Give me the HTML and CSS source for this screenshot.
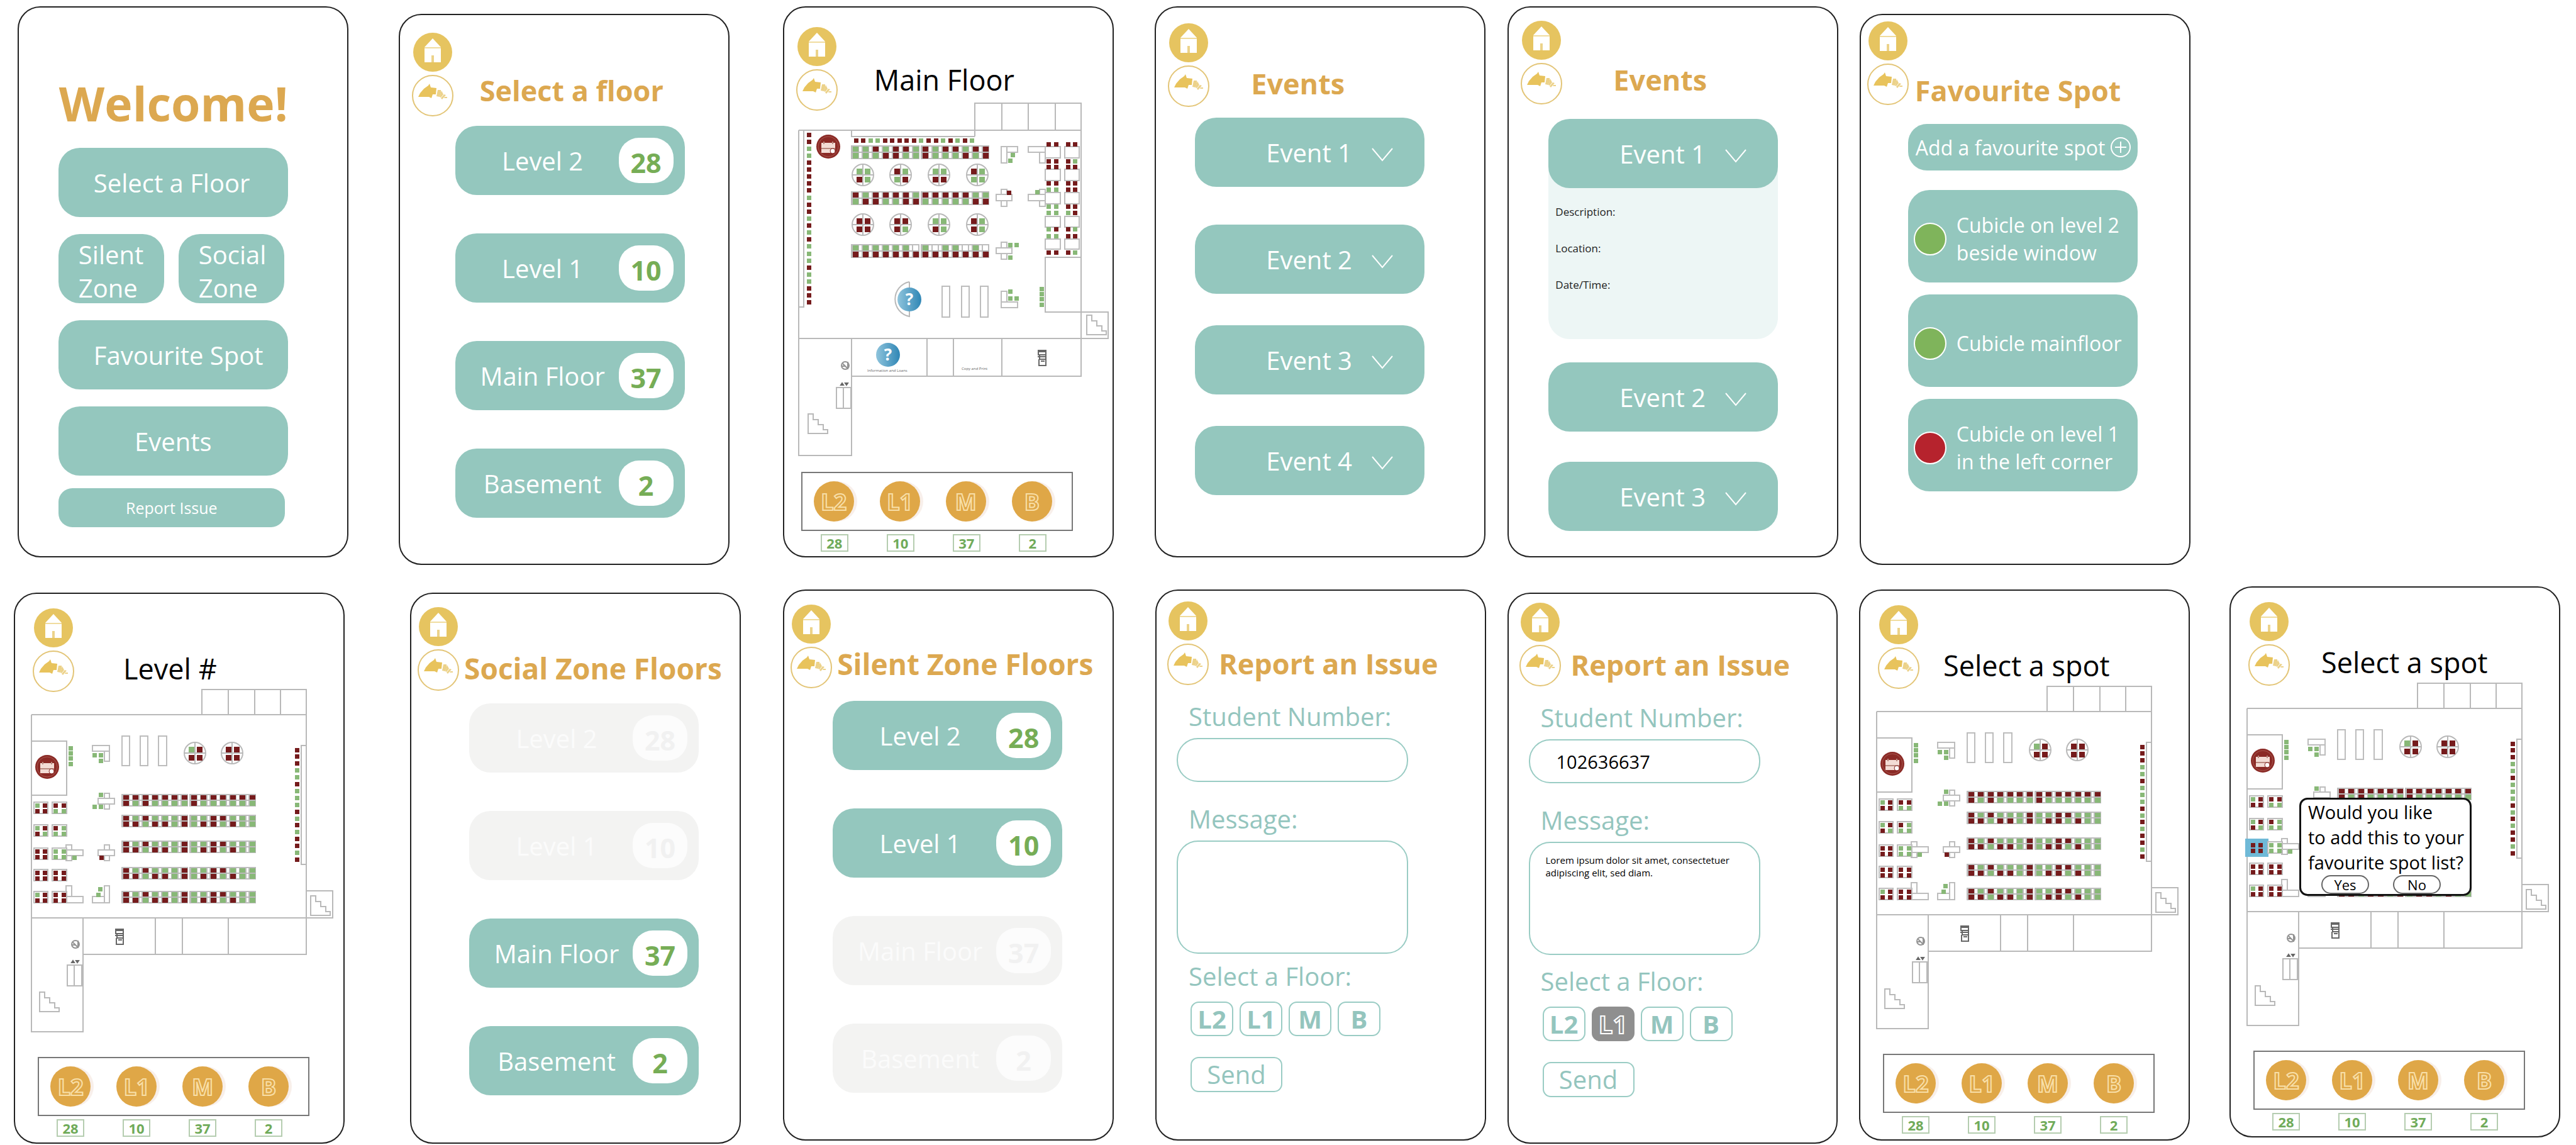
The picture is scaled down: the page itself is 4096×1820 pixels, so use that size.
FILE: index.html
```html
<!DOCTYPE html>
<html lang="en">
<head>
<meta charset="utf-8">
<title>Library seat finder screens</title>
<link rel="stylesheet" href="styles.css">
</head>
<body>
<svg class="sprite" aria-hidden="true">
  <symbol id="i-home" viewBox="0 0 62 62">
    <circle cx="31" cy="31" r="31" fill="#e6c460"/>
    <path d="M31 9L44 23V47H18V23Z" fill="#fff"/>
    <path d="M18 24H44" stroke="#f0dc9e" stroke-width="2"/>
    <path d="M29 36H33V47H29Z" fill="#ecd38a"/>
  </symbol>
  <symbol id="i-back" viewBox="0 0 66 66">
    <circle cx="33" cy="33" r="32" fill="#fff" stroke="#e3c577" stroke-width="2"/>
    <path d="M10 35L13 29L19 22L26 17L28 14L30 20L39 21L38 31H33L31 37L27 35Z" fill="#e8c35c"/>
    <path d="M41 24H46V29L44 35L39 34Z" fill="#ecd28a"/>
    <path d="M47 25L50 31L46 36L44 35ZM51 31L54 32L48 39L46 37ZM52 35H56V37H51Z" fill="#ecd28a"/>
  </symbol>
  <symbol id="i-chevron" viewBox="0 0 34 22">
    <path d="M1 1L17 20L33 1" fill="none" stroke="#fff" stroke-width="2"/>
  </symbol>
  <symbol id="i-plus" viewBox="0 0 34 34">
    <circle cx="17" cy="17" r="15" fill="none" stroke="#fff" stroke-width="2"/>
    <path d="M17 8V26M8 17H26" stroke="#fff" stroke-width="2"/>
  </symbol>
</svg>

<main class="board">
  <div class="row">
    <section class="phone welcome">
      <h1 class="hero">Welcome!</h1>
      <div class="menu">
        <button class="pill pill--start">Select a Floor</button>
        <div class="zones">
          <button class="pill pill--zone">Silent<br>Zone</button>
          <button class="pill pill--zone">Social<br>Zone</button>
        </div>
        <button class="pill pill--start">Favourite Spot</button>
        <button class="pill">Events</button>
        <button class="pill pill--small">Report Issue</button>
      </div>
    </section>

    <section class="phone floors low">
      <header class="head">
        <nav class="nav"><a href="#home" aria-label="Home"><svg class="home"><use href="#i-home"/></svg></a><a href="#back" aria-label="Back"><svg class="back"><use href="#i-back"/></svg></a></nav>
        <h2 class="title">Select a floor</h2>
      </header>
      <div class="stack stack--floors">
        <button class="pill pill--floor"><span class="name">Level 2</span><span class="badge">28</span></button>
        <button class="pill pill--floor"><span class="name">Level 1</span><span class="badge">10</span></button>
        <button class="pill pill--floor"><span class="name">Main Floor</span><span class="badge">37</span></button>
        <button class="pill pill--floor"><span class="name">Basement</span><span class="badge">2</span></button>
      </div>
    </section>

    <section class="phone map map--main">
      <header class="head">
        <nav class="nav"><a href="#home" aria-label="Home"><svg class="home"><use href="#i-home"/></svg></a><a href="#back" aria-label="Back"><svg class="back"><use href="#i-back"/></svg></a></nav>
        <h2 class="title title--plain">Main Floor</h2>
      </header>
      <svg class="plan" data-plan="main" viewBox="0 0 496 566" role="img" aria-label="Main floor seats"></svg>
      <div class="switch"><button class="disc">L2</button><button class="disc">L1</button><button class="disc">M</button><button class="disc">B</button></div>
      <div class="counts"><span>28</span><span>10</span><span>37</span><span>2</span></div>
    </section>

    <section class="phone events">
      <header class="head">
        <nav class="nav"><a href="#home" aria-label="Home"><svg class="home"><use href="#i-home"/></svg></a><a href="#back" aria-label="Back"><svg class="back"><use href="#i-back"/></svg></a></nav>
        <h2 class="title">Events</h2>
      </header>
      <div class="stack stack--events">
        <button class="pill pill--event">Event 1<svg class="chevron"><use href="#i-chevron"/></svg></button>
        <button class="pill pill--event">Event 2<svg class="chevron"><use href="#i-chevron"/></svg></button>
        <button class="pill pill--event">Event 3<svg class="chevron"><use href="#i-chevron"/></svg></button>
        <button class="pill pill--event">Event 4<svg class="chevron"><use href="#i-chevron"/></svg></button>
      </div>
    </section>

    <section class="phone events events--open">
      <header class="head">
        <nav class="nav"><a href="#home" aria-label="Home"><svg class="home"><use href="#i-home"/></svg></a><a href="#back" aria-label="Back"><svg class="back"><use href="#i-back"/></svg></a></nav>
        <h2 class="title">Events</h2>
      </header>
      <div class="stack stack--events">
        <div class="expanded">
          <button class="pill pill--event" aria-expanded="true">Event 1<svg class="chevron"><use href="#i-chevron"/></svg></button>
          <div class="details"><p>Description:</p><p>Location:</p><p>Date/Time:</p></div>
        </div>
        <button class="pill pill--event">Event 2<svg class="chevron"><use href="#i-chevron"/></svg></button>
        <button class="pill pill--event">Event 3<svg class="chevron"><use href="#i-chevron"/></svg></button>
      </div>
    </section>

    <section class="phone favourites low">
      <header class="head">
        <nav class="nav"><a href="#home" aria-label="Home"><svg class="home"><use href="#i-home"/></svg></a><a href="#back" aria-label="Back"><svg class="back"><use href="#i-back"/></svg></a></nav>
        <h2 class="title">Favourite Spot</h2>
      </header>
      <div class="stack stack--spots">
        <button class="pill pill--add">Add a favourite spot<svg class="plus"><use href="#i-plus"/></svg></button>
        <button class="pill pill--spot"><span class="dot"></span><span>Cubicle on level 2<br>beside window</span></button>
        <button class="pill pill--spot"><span class="dot"></span><span>Cubicle mainfloor</span></button>
        <button class="pill pill--spot"><span class="dot dot--taken"></span><span>Cubicle on level 1<br>in the left corner</span></button>
      </div>
    </section>
  </div>

  <div class="row row--second">
    <section class="phone map map--level low">
      <header class="head">
        <nav class="nav"><a href="#home" aria-label="Home"><svg class="home"><use href="#i-home"/></svg></a><a href="#back" aria-label="Back"><svg class="back"><use href="#i-back"/></svg></a></nav>
        <h2 class="title title--plain">Level #</h2>
      </header>
      <svg class="plan" data-plan="level" viewBox="0 0 496 566" role="img" aria-label="Level seats"></svg>
      <div class="switch"><button class="disc">L2</button><button class="disc">L1</button><button class="disc">M</button><button class="disc">B</button></div>
      <div class="counts"><span>28</span><span>10</span><span>37</span><span>2</span></div>
    </section>

    <section class="phone zone zone--social low">
      <header class="head">
        <nav class="nav"><a href="#home" aria-label="Home"><svg class="home"><use href="#i-home"/></svg></a><a href="#back" aria-label="Back"><svg class="back"><use href="#i-back"/></svg></a></nav>
        <h2 class="title">Social Zone Floors</h2>
      </header>
      <div class="stack stack--floors">
        <button class="pill pill--floor" disabled><span class="name">Level 2</span><span class="badge">28</span></button>
        <button class="pill pill--floor" disabled><span class="name">Level 1</span><span class="badge">10</span></button>
        <button class="pill pill--floor"><span class="name">Main Floor</span><span class="badge">37</span></button>
        <button class="pill pill--floor"><span class="name">Basement</span><span class="badge">2</span></button>
      </div>
    </section>

    <section class="phone zone zone--silent">
      <header class="head">
        <nav class="nav"><a href="#home" aria-label="Home"><svg class="home"><use href="#i-home"/></svg></a><a href="#back" aria-label="Back"><svg class="back"><use href="#i-back"/></svg></a></nav>
        <h2 class="title">Silent Zone Floors</h2>
      </header>
      <div class="stack stack--floors">
        <button class="pill pill--floor"><span class="name">Level 2</span><span class="badge">28</span></button>
        <button class="pill pill--floor"><span class="name">Level 1</span><span class="badge">10</span></button>
        <button class="pill pill--floor" disabled><span class="name">Main Floor</span><span class="badge">37</span></button>
        <button class="pill pill--floor" disabled><span class="name">Basement</span><span class="badge">2</span></button>
      </div>
    </section>

    <section class="phone report report--empty">
      <header class="head">
        <nav class="nav"><a href="#home" aria-label="Home"><svg class="home"><use href="#i-home"/></svg></a><a href="#back" aria-label="Back"><svg class="back"><use href="#i-back"/></svg></a></nav>
        <h2 class="title">Report an Issue</h2>
      </header>
      <form class="form">
        <label for="number-a">Student Number:</label>
        <input id="number-a" class="field" type="text">
        <label for="message-a">Message:</label>
        <textarea id="message-a" class="field field--message"></textarea>
        <p class="legend" id="floor-a">Select a Floor:</p>
        <div class="choices" role="group" aria-labelledby="floor-a">
          <button type="button">L2</button><button type="button">L1</button><button type="button">M</button><button type="button">B</button>
        </div>
        <button class="send" type="button">Send</button>
      </form>
    </section>

    <section class="phone report report--filled low">
      <header class="head">
        <nav class="nav"><a href="#home" aria-label="Home"><svg class="home"><use href="#i-home"/></svg></a><a href="#back" aria-label="Back"><svg class="back"><use href="#i-back"/></svg></a></nav>
        <h2 class="title">Report an Issue</h2>
      </header>
      <form class="form">
        <label for="number-b">Student Number:</label>
        <input id="number-b" class="field" type="text" value="102636637">
        <label for="message-b">Message:</label>
        <textarea id="message-b" class="field field--message">Lorem ipsum dolor sit amet, consectetuer adipiscing elit, sed diam.</textarea>
        <p class="legend" id="floor-b">Select a Floor:</p>
        <div class="choices" role="group" aria-labelledby="floor-b">
          <button type="button">L2</button><button type="button" aria-pressed="true">L1</button><button type="button">M</button><button type="button">B</button>
        </div>
        <button class="send" type="button">Send</button>
      </form>
    </section>

    <section class="phone map map--level map--spot">
      <header class="head">
        <nav class="nav"><a href="#home" aria-label="Home"><svg class="home"><use href="#i-home"/></svg></a><a href="#back" aria-label="Back"><svg class="back"><use href="#i-back"/></svg></a></nav>
        <h2 class="title title--plain">Select a spot</h2>
      </header>
      <svg class="plan" data-plan="level" viewBox="0 0 496 566" role="img" aria-label="Level seats"></svg>
      <div class="switch"><button class="disc">L2</button><button class="disc">L1</button><button class="disc">M</button><button class="disc">B</button></div>
      <div class="counts"><span>28</span><span>10</span><span>37</span><span>2</span></div>
    </section>

    <section class="phone map map--level map--confirm high">
      <header class="head">
        <nav class="nav"><a href="#home" aria-label="Home"><svg class="home"><use href="#i-home"/></svg></a><a href="#back" aria-label="Back"><svg class="back"><use href="#i-back"/></svg></a></nav>
        <h2 class="title title--plain">Select a spot</h2>
      </header>
      <svg class="plan" data-plan="level" data-picked viewBox="0 0 496 566" role="img" aria-label="Level seats"></svg>
      <div class="switch"><button class="disc">L2</button><button class="disc">L1</button><button class="disc">M</button><button class="disc">B</button></div>
      <div class="counts"><span>28</span><span>10</span><span>37</span><span>2</span></div>
      <div class="dialog" role="dialog" aria-labelledby="ask">
        <p id="ask">Would you like<br>to add this to your<br>favourite spot list?</p>
        <div class="answers"><button>Yes</button><button>No</button></div>
      </div>
    </section>
  </div>
</main>
<script src="plans.js"></script>
</body>
</html>
```

FILE: styles.css
```css
* { box-sizing: border-box; }

body {
  margin: 0;
  background: #fff;
  color: #000;
  font-family: "Open Sans", "Noto Sans", sans-serif;
}

h1, h2, p { margin: 0; }

button, input, textarea {
  margin: 0;
  padding: 0;
  border: 0;
  background: none;
  color: inherit;
  font: inherit;
}

svg { display: block; }
.sprite { position: absolute; width: 0; height: 0; }

/* Board */
.row { display: flex; align-items: flex-start; }
.row--second { margin-top: 34px; }

.phone {
  --gap: 1%;
  flex: 0 0 12.84%;
  min-height: 876px;
  margin-top: 10px;
  margin-left: var(--gap);
  border: 2px solid #222;
  border-radius: 36px;
  background: #fff;
}
.row .low { margin-top: 22px; }
.row--second .phone { margin-top: 5px; }
.row--second .low { margin-top: 10px; }
.row--second .high { margin-top: 0; }

.welcome { --gap: 0.68%; }
.floors { --gap: 1.95%; }
.map--main { --gap: 2.08%; }
.events { --gap: 1.6%; }
.events--open { --gap: 0.86%; }
.favourites { --gap: 0.82%; }
.map--level { --gap: 0.54%; }
.zone--social { --gap: 2.54%; }
.zone--silent { --gap: 1.64%; }
.report--empty { --gap: 1.61%; }
.report--filled { --gap: 0.82%; }
.map--spot { --gap: 0.82%; }
.map--confirm { --gap: 1.54%; position: relative; }

/* Screen header */
.head {
  display: flex;
  align-items: flex-start;
  padding: var(--nav-y) 0 0 var(--nav-x);
  white-space: nowrap;
}
.nav {
  display: flex;
  flex-direction: column;
  align-items: center;
  gap: 5px;
  width: 66px;
}
.home { width: 62px; height: 62px; }
.back { width: 66px; height: 66px; }
.title {
  margin: var(--title-y, 66px) 0 0 var(--title-x);
  color: #dca850;
  font-size: 45px;
  line-height: 60px;
  font-weight: 700;
}
.title--plain { color: #000; font-weight: 400; }

.floors { --nav-x: 19px; --nav-y: 28px; --title-x: 42px; --title-y: 62px; --body-x: 88px; --body-gap: 15px; }
.map--main { --nav-x: 19px; --nav-y: 31px; --title-x: 58px; --title-y: 54px; --body-gap: -14px; }
.events { --nav-x: 19px; --nav-y: 25px; --title-x: 66px; --body-x: 62px; --body-gap: 17px; }
.events--open { --nav-y: 21px; --title-x: 81px; --title-y: 64px; --body-x: 63px; --body-gap: 23px; }
.favourites { --nav-x: 10px; --nav-y: 10px; --title-x: 10px; --title-y: 80px; --body-x: 75px; --body-gap: 23px; }
.map--level { --nav-x: 28px; --nav-y: 23px; --title-x: 78px; --body-gap: -6px; }
.map--spot { --title-x: 38px; }
.map--confirm { --title-x: 50px; }
.zone { --nav-x: 10px; --nav-y: 21px; --title-x: 8px; --title-y: 67px; --body-x: 92px; --body-gap: 20px; }
.zone .title { font-size: 46px; }
.zone--silent { --body-x: 77px; --nav-y: 22px; --title-y: 64px; --body-gap: 20px; }
.report { --nav-x: 17px; --nav-y: 17px; --title-x: 16px; --title-y: 69px; --body-gap: 26px; }
.report--filled { --nav-x: 17px; --nav-y: 14px; }

/* Filled buttons */
.pill {
  display: flex;
  align-items: center;
  justify-content: center;
  width: 365px;
  height: 110px;
  border-radius: 34px;
  background: #94c7be;
  color: #fff;
  font-size: 40px;
  line-height: 53px;
  text-align: left;
  white-space: nowrap;
}
.pill--start { justify-content: flex-start; padding-left: 56px; }

.hero {
  padding: 107px 0 0 64px;
  color: #dca850;
  font-size: 75px;
  line-height: 90px;
}
.menu { display: grid; gap: 27px; padding: 26px 0 0 63px; }
.zones { display: flex; gap: 23px; }
.pill--zone { justify-content: flex-start; width: 168px; padding: 7px 0 0 32px; }
.pill--small { width: 360px; height: 62px; margin-top: -7px; border-radius: 22px; font-size: 25px; }

.stack { display: flex; flex-direction: column; padding: var(--body-gap) 0 0 var(--body-x); }
.stack--floors { gap: 61px; }
.stack--events { gap: 50px; }
.stack--events > .pill:first-child { margin-bottom: 10px; }
.events--open .stack { gap: 48px; }
.stack--spots { gap: 19px; }

.pill--floor { padding: 0 18px 0 18px; }
.name { flex: 1; text-align: center; }
.badge {
  width: 87px;
  height: 72px;
  padding-top: 4px;
  border-radius: 32px;
  background: #fff;
  color: #76ad56;
  font-size: 43px;
  font-weight: 700;
  line-height: 72px;
  text-align: center;
}
.pill:disabled { background: #f3f3f2; color: #fbfbfb; }
.pill:disabled .badge { background: #fcfcfc; color: #f1f1f1; }

.pill--event { justify-content: space-between; padding: 0 50px 0 113px; }
.chevron { width: 34px; height: 22px; margin-top: 8px; }
.expanded { margin-bottom: -11px; }
.expanded .pill { position: relative; }
.details {
  width: 365px;
  height: 280px;
  margin-top: -40px;
  padding: 66px 0 0 11px;
  border-radius: 0 0 34px 34px;
  background: #edf6f5;
  color: #222;
  font-size: 17px;
  line-height: 24px;
}
.details p + p { margin-top: 34px; }

.pill--add { justify-content: flex-start; gap: 8px; height: 74px; margin-bottom: 12px; padding-left: 12px; border-radius: 30px; font-size: 32px; }
.plus { width: 34px; height: 34px; }
.pill--spot { justify-content: flex-start; gap: 16px; height: 147px; padding: 9px 0 0 9px; font-size: 32px; line-height: 44px; }
.dot { width: 52px; height: 52px; border: 2px solid #fff; border-radius: 50%; background: #7fb45b; }
.dot--taken { background: #b6232d; }

/* Floor plans */
.plan { width: 496px; height: 566px; margin: var(--body-gap) 0 0 22px; overflow: visible; }
.map--level .plan { margin-left: 24px; }
.switch {
  display: flex;
  align-items: center;
  gap: 41px;
  width: 432px;
  height: 94px;
  margin: 22px 0 0 27px;
  padding-left: 18px;
  border: 2px solid #777;
}
.map--level .switch { margin: 20px 0 0 36px; }
.disc {
  width: 64px;
  height: 64px;
  border-radius: 50%;
  background: #dfa747;
  box-shadow: 5px 0 1px #f8efea;
  color: transparent;
  -webkit-text-stroke: 2px #f8dfa8;
  font-size: 36px;
  font-weight: 700;
}
.counts { display: flex; gap: 61px; margin-top: 5px; padding-left: 58px; }
.map--level .counts { padding-left: 66px; }
.counts span {
  width: 44px;
  height: 28px;
  border: 2px solid #b5cdb0;
  color: #70ab5a;
  font-size: 22px;
  font-weight: 700;
  line-height: 25px;
  text-align: center;
}

.wall { fill: none; stroke: #b9b9b9; stroke-width: 2; shape-rendering: crispEdges; }
.curve { fill: none; stroke: #b9b9b9; stroke-width: 2; }
.desk { fill: #fff; stroke: #bdbdbd; stroke-width: 2; shape-rendering: crispEdges; }
.free { fill: #88b877; shape-rendering: crispEdges; }
.used { fill: #751b1c; shape-rendering: crispEdges; }
.glyph { fill: none; stroke: #666; stroke-width: 2; }
.tiny { fill: #666; font-size: 6px; }
.mark { fill: #fff; font-size: 26px; font-weight: 700; }
.picked { fill: #6fb9d7; }

/* Confirmation */
.dialog {
  position: absolute;
  top: 334px;
  left: 109px;
  width: 274px;
  padding: 0 0 0 11px;
  border: 3px solid #111;
  border-radius: 13px;
  background: #fff;
  font-size: 29px;
  line-height: 40px;
  white-space: nowrap;
}
.answers { display: flex; gap: 38px; padding-left: 21px; }
.answers button { width: 76px; height: 30px; border: 2px solid #666; border-radius: 15px; font-size: 22px; line-height: 26px; }

/* Report form */
.form { display: flex; flex-direction: column; align-items: flex-start; padding: var(--body-gap) 0 0 32px; }
.form label, .legend { padding-left: 19px; color: #94c5be; font-size: 40px; line-height: 48px; }
.field {
  width: 368px;
  height: 70px;
  margin: 10px 0 35px;
  padding: 0 42px;
  border: 2px solid #9accc4;
  border-radius: 34px;
  color: #000;
  font-size: 29px;
}
.field--message {
  height: 180px;
  margin-bottom: 12px;
  padding: 17px 30px 0 25px;
  font-size: 15px;
  line-height: 20px;
  resize: none;
  overflow: hidden;
}
.report--filled .field--message { margin-bottom: 18px; }
.choices { display: flex; gap: 10px; margin: 16px 0 0 22px; }
.choices button {
  width: 68px;
  height: 55px;
  border: 2px solid #9accc4;
  border-radius: 13px;
  color: #94c5be;
  font-size: 40px;
  font-weight: 700;
  line-height: 51px;
}
.choices button[aria-pressed="true"] {
  border-color: #8f8f8f;
  background: #8f8f8f;
  color: transparent;
  -webkit-text-stroke: 2px #fff;
}
.send {
  width: 146px;
  height: 56px;
  margin: 33px 0 0 22px;
  border: 2px solid #9accc4;
  border-radius: 13px;
  color: #94c5be;
  font-size: 40px;
  line-height: 50px;
}
```

FILE: plans.js
```js
// Draws the floor plans. R = seat in use, G = free seat, _ = no seat.
const rect = (cls, x, y, w, h) => `<rect class="${cls}" x="${x}" y="${y}" width="${w}" height="${h}"/>`;
const path = (cls, d) => `<path class="${cls}" d="${d}"/>`;

function seat(code, x, y, w = 7, h = 7) {
  if (code === '_') return '';
  return rect(code === 'R' ? 'used' : 'free', Math.round(x - w / 2), Math.round(y - h / 2), w, h);
}

function seats(codes, x, y, dx, dy) {
  return [...codes].map((c, i) => seat(c, x + dx * i, y + dy * i)).join('');
}

// A long table: seven places on each side of a centre line.
function bench(x, y, w, h, top, bottom) {
  const pitch = (w - 11) / 6;
  let out = rect('desk', x, y, w, h);
  for (let i = 0; i < 7; i++) {
    const cx = x + 6 + pitch * i;
    out += rect('desk', Math.round(cx - 5), y, 10, h);
    out += seat(top[i], cx, y + h / 4 + 1, 9, h / 2);
    out += seat(bottom[i], cx, y + h * 3 / 4, 9, h / 2);
  }
  return out + path('wall', `M${x} ${y + h / 2}h${w}`);
}

function roundTable(cx, cy, codes) {
  return `<circle class="curve" cx="${cx}" cy="${cy}" r="17"/>` +
    path('wall', `M${cx - 17} ${cy}h34M${cx} ${cy - 17}v34`) +
    seat(codes[0], cx - 6, cy - 6, 9, 9) + seat(codes[1], cx + 7, cy - 6, 9, 9) +
    seat(codes[2], cx - 6, cy + 7, 9, 9) + seat(codes[3], cx + 7, cy + 7, 9, 9);
}

function booth(x, y, w, codes, picked) {
  const a = x + 5, b = x + w - 5;
  return (picked ? rect('picked', x - 7, y - 5, 37, 29) : rect('desk', x, y, w, 18)) +
    seat(codes[0], a, y + 5) + seat(codes[1], b, y + 5) +
    seat(codes[2], a, y + 14) + seat(codes[3], b, y + 14);
}

const stairs = (x, y) => path('wall', `M${x} ${y}h8v9h8v8h8v8h7v6h-31z`);

const computerIcon = (x, y) =>
  `<circle cx="${x}" cy="${y}" r="19" fill="#8b2a26"/><circle cx="${x}" cy="${y}" r="16" fill="none" stroke="#a8584f" stroke-width="1"/>` +
  `<rect x="${x - 11}" y="${y - 6}" width="22" height="16" fill="#f3dcd5"/><path d="M${x - 11} ${y + 3}h22M${x - 7} ${y - 8}v4M${x + 7} ${y - 8}v4" stroke="#b98a80" stroke-width="2"/>` +
  `<circle cx="${x + 7}" cy="${y + 7}" r="4" fill="#fff" stroke="#8b2a26"/>`;

const helpIcon = (x, y) =>
  `<circle cx="${x}" cy="${y}" r="19" fill="url(#blue)"/><text class="mark" x="${x}" y="${y + 9}" text-anchor="middle">?</text>`;

const washroom = (x, y) => path('glyph', `M${x + 2} ${y + 1}h12v7h-12zM${x + 2} ${y + 3}h12M${x + 4} ${y + 8}v7h10v-7M${x + 1} ${y + 11}h14M${x + 3} ${y + 15}v10h11v-10M${x + 6} ${y + 18}h6`);
const fountain = (x, y) => `<g opacity=".7"><circle class="glyph" cx="${x}" cy="${y}" r="6"/>` + path('glyph', `M${x - 4} ${y - 3}l7 7M${x + 4} ${y - 6}v12M${x - 6} ${y + 1}h6`) + '</g>';
const elevator = (x, y) => path('wall', `M${x} ${y}h23v33h-23zM${x + 11} ${y}v33`) + path('glyph', `M${x + 7} ${y - 4}l2 -3l2 3zM${x + 14} ${y - 7}l2 3l2 -3z`);

function mainFloor() {
  let s = '<defs><linearGradient id="blue"><stop offset="0" stop-color="#8fc4dc"/><stop offset="1" stop-color="#2f86b5"/></linearGradient></defs>';
  s += path('wall', 'M281 55V2H450V45M324 2V45M366 2V45M409 2V45M1 45H450M85 45V55H281M1 45V562H85V376M9 45V326H1M1 376H493V334H393V247H450M450 45V436H85M205 376V436M247 376V436M324 376V436');
  s += seats('RRGGRRRRRGRRGRGRGGGRGGRRR', 17, 52, 0, 11.12);
  s += seats('RRGGRRRRRGRRGRGRG', 92, 61, 11.55, 0);
  s += bench(85, 70, 107, 20, 'GGRGRRG', 'GGGRRGG') + bench(196, 70, 107, 20, 'RGRRGRR', 'RGGGRGR');
  s += bench(85, 143, 107, 20, 'RGRRRRG', 'GRRGGRR') + bench(196, 143, 107, 20, 'RRRRRGG', 'GGGGGRR');
  s += bench(85, 227, 107, 20, 'GGGGGG_', 'RRRRRRR') + bench(196, 227, 107, 20, 'G_GG_G_', 'RRRRRRR');
  ['GGRG', 'RGGR', 'GGRR', 'RGGG'].forEach((c, i) => { s += roundTable([103, 163, 224, 285][i], 116, c); });
  ['RRRR', 'RRRG', 'GGRG', 'RGRG'].forEach((c, i) => { s += roundTable([103, 163, 224, 285][i], 195, c); });
  s += rect('desk', 323, 71, 9, 26) + rect('desk', 332, 71, 17, 9) + seat('G', 341, 84) + seat('G', 337, 93);
  s += rect('desk', 366, 71, 27, 9) + rect('desk', 384, 80, 9, 17);
  s += rect('desk', 323, 139, 9, 27) + rect('desk', 315, 147, 25, 10) + seat('R', 335, 144);
  s += rect('desk', 384, 139, 9, 27) + rect('desk', 366, 147, 27, 10) + seat('G', 380, 143);
  s += rect('desk', 323, 223, 9, 27) + rect('desk', 315, 232, 25, 9) + seat('G', 337, 227) + seat('G', 347, 227) + seat('G', 337, 247);
  [[71, 18], [107, 18], [144, 18], [182, 17], [218, 16]].forEach(([y, h]) => {
    s += rect('desk', 393, y, 24, h) + rect('desk', 424, y, 23, h);
  });
  [[67, 'RRRR'], [94, 'RRRG'], [103, 'RRRR'], [129, 'RRRR'], [139, 'GGRR'], [166, 'GGRR'], [176, 'GGGR'], [202, 'GRRG'], [213, 'GGRR'], [239, 'RRRG']].forEach(([y, c]) => {
    s += seat(c[0], 398, y) + seat(c[1], 410, y) + seat(c[2], 429, y) + seat(c[3], 440, y);
  });
  s += path('curve', 'M177 286A28 28 0 0 0 177 341V286') + helpIcon(177, 314) + helpIcon(143, 402);
  s += rect('desk', 229, 293, 12, 49) + rect('desk', 260, 293, 12, 49) + rect('desk', 290, 293, 12, 49);
  s += rect('desk', 323, 301, 9, 26) + rect('desk', 323, 318, 26, 9) + seat('G', 337, 301) + seat('G', 337, 312) + seat('G', 347, 312);
  s += seats('GGGG', 387, 297, 0, 8.4);
  s += stairs(459, 339) + stairs(16, 496) + fountain(75, 419) + elevator(61, 454) + washroom(380, 394);
  s += '<text class="tiny" x="110" y="429">Information and Loans</text><text class="tiny" x="260" y="426">Copy and Print</text>';
  return s;
}

function level(picked) {
  let s = path('wall', 'M273 42V2H439V423H84M315 2V42M357 2V42M398 2V42M2 42H439M2 42V546H84V365M2 84H58V170H2M439 91H431V280H439M2 365H481V322H439M199 365V423M242 365V423M315 365V423');
  s += computerIcon(27, 125) + seats('GGGG', 64, 95, 0, 8.4);
  s += rect('desk', 99, 91, 27, 9) + rect('desk', 118, 100, 8, 16) + seat('G', 102, 106) + seat('G', 112, 106) + seat('G', 112, 115);
  s += rect('desk', 146, 76, 12, 47) + rect('desk', 175, 76, 12, 47) + rect('desk', 204, 76, 13, 47);
  s += roundTable(262, 103, 'GRRR') + roundTable(321, 103, 'RRRR');
  s += seats('RRRGGRGGGRGRGRRGR', 424, 98, 0, 10.9);
  s += bench(146, 169, 104, 18, 'RRRRRRR', 'RGRGGGG') + bench(254, 169, 104, 18, 'RRRRRRR', 'RGGGGGG');
  [202, 243, 285, 323].forEach((y) => {
    s += bench(146, y, 104, 18, 'RGRGGGR', 'RRGRRGR') + bench(254, y, 104, 18, 'GGRRGGG', 'GRRGRGG');
  });
  s += rect('desk', 118, 167, 8, 25) + rect('desk', 108, 175, 26, 9) + seat('G', 112, 169) + seat('G', 102, 188) + seat('G', 112, 188);
  s += rect('desk', 118, 249, 8, 25) + rect('desk', 108, 257, 26, 9) + seat('R', 113, 269);
  s += rect('desk', 57, 249, 9, 25) + rect('desk', 57, 257, 27, 9) + seat('G', 70, 269);
  s += rect('desk', 57, 314, 9, 27) + rect('desk', 57, 331, 27, 10);
  s += rect('desk', 118, 314, 8, 27) + rect('desk', 99, 331, 19, 10) + seat('G', 111, 319) + seat('G', 108, 328);
  [[181, 'GRRR', 'RRGG'], [217, 'GRRG', 'RGGG'], [254, 'RRRR', 'GGGG'], [288, 'RRRR', 'RRRR'], [323, 'GRRR', 'RRRR']].forEach(([y, a, b]) => {
    s += booth(6, y, 22, a, picked && y === 254) + booth(35, y, 23, b, false);
  });
  s += stairs(446, 330) + stairs(15, 483) + fountain(72, 407) + elevator(59, 440) + washroom(134, 382);
  return s;
}

document.querySelectorAll('[data-plan]').forEach((plan) => {
  plan.innerHTML = plan.dataset.plan === 'main'
    ? mainFloor() + computerIcon(48, 71)
    : level('picked' in plan.dataset);
});
```
